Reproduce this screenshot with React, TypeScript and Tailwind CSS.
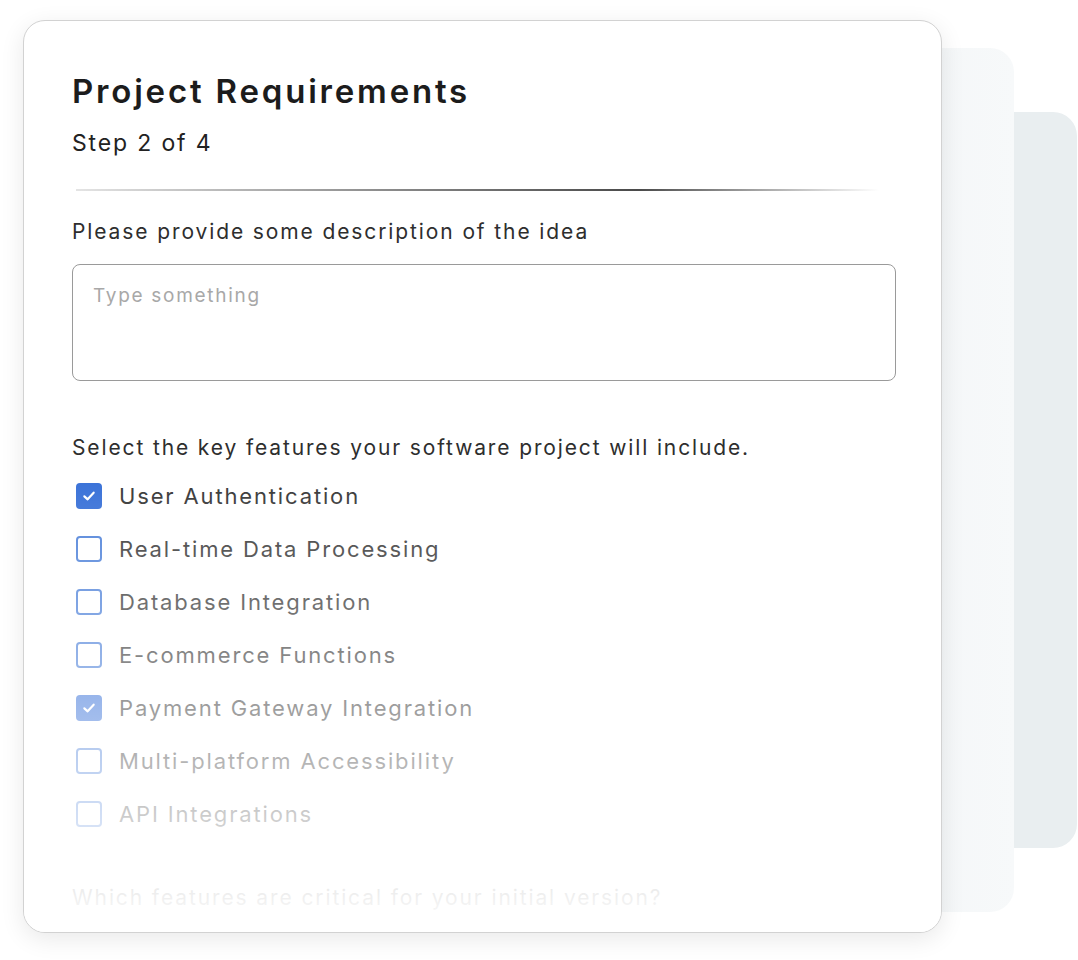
import React from 'react';

const FEATURES: { label: string; checked: boolean }[] = [
  { label: 'User Authentication', checked: true },
  { label: 'Real-time Data Processing', checked: false },
  { label: 'Database Integration', checked: false },
  { label: 'E-commerce Functions', checked: false },
  { label: 'Payment Gateway Integration', checked: true },
  { label: 'Multi-platform Accessibility', checked: false },
  { label: 'API Integrations', checked: false },
];

function Checkbox({ checked }: { checked: boolean }) {
  return checked ? (
    <span className="flex h-[26px] w-[26px] shrink-0 items-center justify-center rounded-[4px] bg-[#3a72d8]">
      <svg viewBox="0 0 24 24" className="h-[16px] w-[16px]" fill="none" stroke="white" strokeWidth="3.2" strokeLinecap="round" strokeLinejoin="round">
        <polyline points="5 12.5 10 17 19 7" />
      </svg>
    </span>
  ) : (
    <span className="h-[26px] w-[26px] shrink-0 rounded-[4px] border-2 border-[#4f82d9] bg-white" />
  );
}

export default function App() {
  return (
    <div
      className="relative min-h-[960px] w-full overflow-hidden bg-white"
      style={{ fontFamily: 'Inter, "Noto Sans", sans-serif' }}
    >
      {/* stacked cards behind */}
      <div className="absolute left-[700px] top-[112px] h-[736px] w-[377px] rounded-r-[24px] bg-[#e9eef0]" />
      <div className="absolute left-[700px] top-[48px] h-[864px] w-[314px] rounded-r-[24px] bg-linear-to-r from-[#eef2f4] to-[#f7f9fa]" />

      <div className="pl-[23px] pt-[20px]">
        <div className="relative z-10 h-[913px] w-[919px] overflow-hidden rounded-[22px] border border-[#d2d2d2] bg-white px-12 pt-[50px] shadow-[0_6px_24px_rgba(0,0,0,0.09)]">
          <h1 className="text-[33px] font-semibold leading-[40px] tracking-[0.085em] text-[#1c1c1c]">
            Project Requirements
          </h1>
          <p className="mt-[17px] text-[23px] leading-[30px] tracking-[0.08em] text-[#222]">Step 2 of 4</p>

          <div className="ml-[4px] mr-[14px] mt-[31px] h-[2px] bg-linear-to-r from-[#e4e4e4] via-[#4a4a4a] via-70% to-white/0" />

          <p className="mt-[28px] text-[21px] leading-[26px] tracking-[0.09em] text-[#2e2e2e]">
            Please provide some description of the idea
          </p>
          <div className="mt-[19px] h-[117px] w-[824px] rounded-[8px] border border-[#9a9a9a] px-[20px] pt-[17px]">
            <span className="text-[19px] tracking-[0.09em] text-[#a8a8a8]">Type something</span>
          </div>

          <p className="mt-[54px] text-[21px] leading-[26px] tracking-[0.089em] text-[#2e2e2e]">
            Select the key features your software project will include.
          </p>

          <ul className="mt-[21px] flex flex-col gap-[25px]">
            {FEATURES.map((f) => (
              <li key={f.label} className="flex h-[28px] items-center gap-[17px] pl-[4px]">
                <Checkbox checked={f.checked} />
                <span className="text-[22px] tracking-[0.084em] text-[#3a3a3a]">{f.label}</span>
              </li>
            ))}
          </ul>

          <p className="mt-[57px] text-[21px] leading-[26px] tracking-[0.09em] text-[#3a3a3a]">
            Which features are critical for your initial version?
          </p>

          {/* fade-out over the lower part of the form */}
          <div className="pointer-events-none absolute inset-x-0 bottom-0 h-[453px] bg-linear-to-b from-white/0 to-white" />
        </div>
      </div>
    </div>
  );
}
